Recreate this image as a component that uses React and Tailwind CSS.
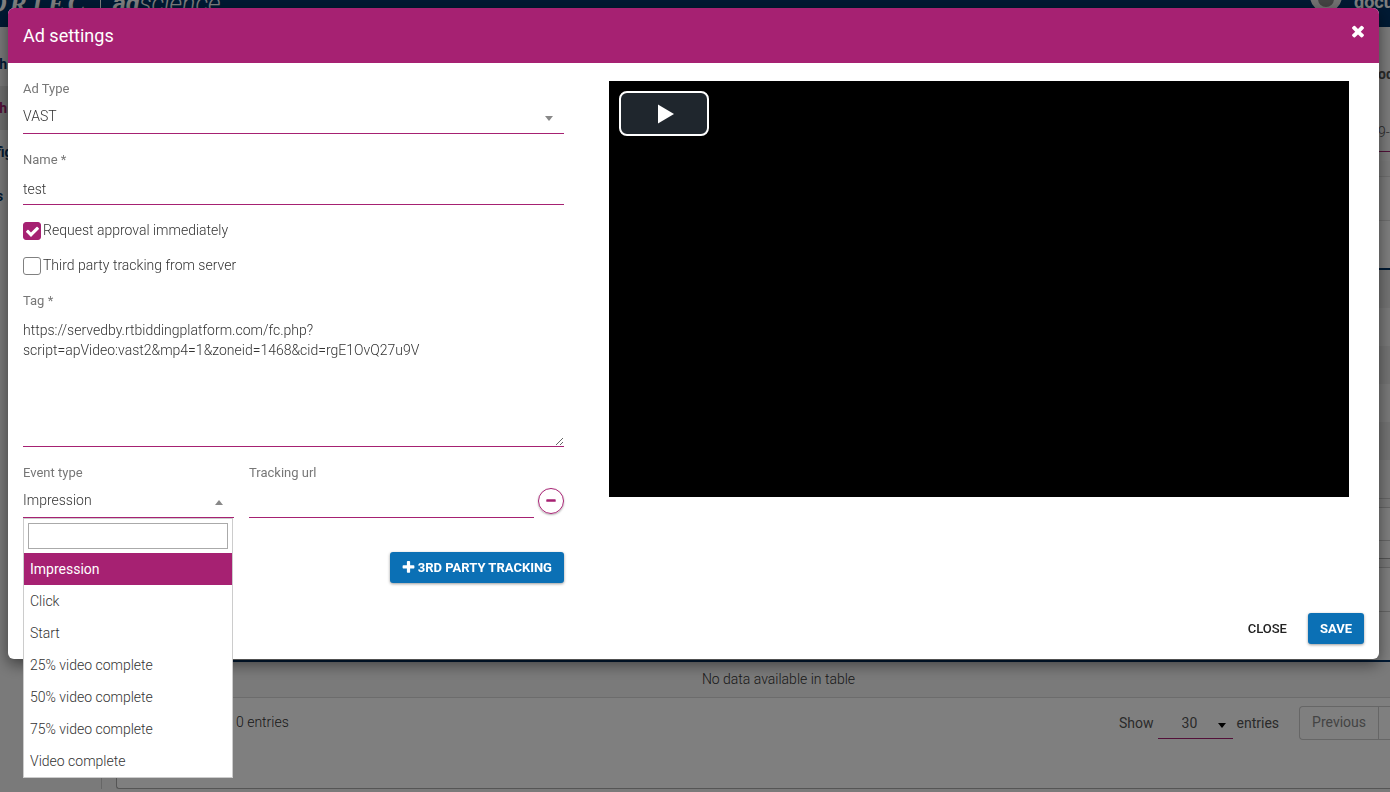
import { useState } from "react";

const events = [
  "Impression",
  "Click",
  "Start",
  "25% video complete",
  "50% video complete",
  "75% video complete",
  "Video complete",
];

const labelClass = "block text-[13px] leading-5 font-normal text-[#777]";
const lineClass = "border-b border-[#a62172] bg-transparent outline-none";

const icons = {
  times:
    "M1490 1322q0 40-28 68l-136 136q-28 28-68 28t-68-28l-294-294-294 294q-28 28-68 28t-68-28l-136-136q-28-28-28-68t28-68l294-294-294-294q-28-28-28-68t28-68l136-136q28-28 68-28t68 28l294 294 294-294q28-28 68-28t68 28l136 136q28 28 28 68t-28 68l-294 294 294 294q28 28 28 68z",
  check:
    "M1671 566q0 40-28 68l-724 724-136 136q-28 28-68 28t-68-28l-136-136-362-362q-28-28-28-68t28-68l136-136q28-28 68-28t68 28l294 295 656-657q28-28 68-28t68 28l136 136q28 28 28 68z",
  plus:
    "M1600 736v192q0 40-28 68t-68 28h-416v416q0 40-28 68t-68 28h-192q-40 0-68-28t-28-68v-416h-416q-40 0-68-28t-28-68v-192q0-40 28-68t68-28h416v-416q0-40 28-68t68-28h192q40 0 68 28t28 68v416h416q40 0 68 28t28 68z",
  minus:
    "M1600 736v192q0 40-28 68t-68 28h-1216q-40 0-68-28t-28-68v-192q0-40 28-68t68-28h1216q40 0 68 28t28 68z",
};

function Icon({ name, className }) {
  return (
    <svg viewBox="0 0 1792 1792" className={"shrink-0 " + className} aria-hidden="true">
      <path d={icons[name]} fill="currentColor" />
    </svg>
  );
}

function Caret({ up = false, className = "text-[#888]" }) {
  return (
    <svg viewBox="0 0 8 5" className={"mt-1 h-[5px] w-2 shrink-0 " + className} aria-hidden="true">
      <path d={up ? "M0 5 4 0 8 5Z" : "M0 0 8 0 4 5Z"} fill="currentColor" />
    </svg>
  );
}

function Header() {
  return (
    <header className="flex h-[27px] items-start justify-between overflow-hidden bg-[#003468] text-white">
      <div className="-mt-3 -ml-3 flex items-center gap-3 whitespace-nowrap">
        <span className="font-['Liberation_Serif',serif] text-[26px] leading-8 font-bold tracking-widest italic">ORTEC</span>
        <span className="h-6 w-px bg-white" />
        <span className="text-[25px] leading-8 italic">
          <b>ad</b>
          <span className="font-light">science</span>
        </span>
      </div>
      <div className="-mt-5 flex gap-3">
        <svg viewBox="0 0 32 32" className="size-8" aria-hidden="true">
          <circle cx="16" cy="16" r="16" fill="#e5e5e5" />
          <circle cx="16" cy="19" r="8" fill="#888" />
        </svg>
        <span className="mt-3 w-9 overflow-hidden text-[18px] leading-5 font-bold whitespace-nowrap">docu</span>
      </div>
    </header>
  );
}

function Sidebar() {
  return (
    <nav className="w-[102px] shrink-0 overflow-hidden border-r border-[#ccc] pt-[15px] text-[14px] font-bold text-[#003468]">
      <a href="#dash" className="-ml-2 flex h-11 items-center">sh</a>
      <a href="#campaigns" className="-ml-2 flex h-11 items-center bg-[#dedede] text-[#a62172]">sh</a>
      <a href="#config" className="-ml-1 flex h-11 items-center">fig</a>
      <a href="#reports" className="-ml-1 flex h-11 items-center">s</a>
    </nav>
  );
}

function Background() {
  return (
    <div className="h-screen overflow-hidden bg-[#f4f4f4]">
      <Header />
      <div className="flex">
        <Sidebar />
        <main className="ml-[14px] min-w-0 flex-1 text-[14px] text-[#555]">
          <div className="h-[134px] bg-[#f8f8f8]">
            <div className="flex h-[94px] items-center justify-end font-bold"><span className="w-3 overflow-hidden whitespace-nowrap">od</span></div>
            <div className="-mt-2 flex h-[39px] items-center justify-end border-b border-[#a62172]"><span className="w-3 overflow-hidden font-light whitespace-nowrap">9-0</span></div>
          </div>
          <div className="mt-[15px] h-[45px] border-y border-[#ddd] bg-[#f8f8f8]" />
          <div className="h-[49px] border-b-2 border-[#003468] bg-white" />
          <div className="h-[38px] bg-[#e8e8e8]" />
          <div className="h-[38px] bg-[#f4f4f4]" />
          <div className="h-[38px] bg-[#e8e8e8]" />
          <div className="h-[38px] bg-[#f4f4f4]" />
          <div className="h-[38px] bg-[#e8e8e8]" />
          <div className="h-[39px] border-b border-[#ccc] bg-[#f4f4f4]" />
          <div className="mt-2 h-[34px] border-y border-[#ccc] bg-white" />
          <div className="h-[18px] border-b border-[#aaa] bg-white" />
          <section className="mt-2 rounded-bl-[3px] border-b border-l border-[#aaa] bg-white">
            <div className="h-[45px] border-y border-[#ccc]" />
            <table className="w-full border-b border-[#d8d8d8]">
              <thead><tr><th className="h-[49px] border-b-2 border-[#003468]" /></tr></thead>
              <tbody>
                <tr>
                  <td className="h-9 bg-[#f4f4f4] pl-[50px] text-center leading-5 font-light text-[#333]">No data available in table</td>
                </tr>
              </tbody>
            </table>
            <div className="flex h-[90px] items-start justify-between pt-2 pl-[119px]">
              <span className="pt-1.5 leading-5 font-light text-[#333]">0 entries</span>
              <div className="flex items-start font-normal">
                <label htmlFor="rows" className="pt-[7px] leading-5">Show</label>
                <div className="mx-1 flex h-[33px] w-[75px] items-center border-b border-[#a62172] pt-1">
                  <select id="rows" defaultValue="30" className="w-[60px] appearance-none bg-transparent pl-6 outline-none">
                    <option>30</option>
                  </select>
                  <Caret className="text-black" />
                </div>
                <span className="pt-[7px] leading-5">entries</span>
                <div className="ml-5 flex h-[34px] items-stretch rounded-l border border-r-0 border-[#ccc] text-[#888]">
                  <button type="button" className="border-r border-[#ccc] px-3">Previous</button>
                  <span className="w-[11px]" />
                </div>
              </div>
            </div>
          </section>
        </main>
      </div>
    </div>
  );
}

function CheckRow({ id, label, checked, onChange }) {
  return (
    <div className="flex items-center gap-[2px]">
      <span className="grid size-[18px] place-items-center">
        <input
          id={id}
          type="checkbox"
          checked={checked}
          onChange={onChange}
          className="col-start-1 row-start-1 size-[18px] appearance-none rounded-[3px] border border-[#808080] bg-white checked:border-[#a62172] checked:bg-[#a62172]"
        />
        {checked && <Icon name="check" className="pointer-events-none col-start-1 row-start-1 size-[15px] text-white" />}
      </span>
      <label htmlFor={id} className="pb-[2px] leading-5">{label}</label>
    </div>
  );
}

function EventSelect() {
  const [value, setValue] = useState("Impression");
  return (
    <div className="relative">
      <span id="event-label" className={labelClass}>Event type</span>
      <button
        type="button"
        aria-labelledby="event-label"
        aria-expanded="true"
        className={lineClass + " flex h-[35px] w-full items-center justify-between pr-[11px] font-light"}
      >
        {value}
        <Caret up />
      </button>
      <div className="absolute top-full left-0 w-[210px] border border-[#ccc] bg-white">
        <div className="p-1">
          <input aria-label="Search event types" className="block h-[26px] w-full border border-[#aaa] px-1 outline-none" />
        </div>
        <ul role="listbox" aria-labelledby="event-label">
          {events.map((e) => (
            <li
              key={e}
              role="option"
              aria-selected={e === value}
              onClick={() => setValue(e)}
              className={e === value ? "bg-[#a62172] p-1.5 leading-5 font-normal text-white" : "p-1.5 leading-5"}
            >
              {e}
            </li>
          ))}
        </ul>
      </div>
    </div>
  );
}

export default function App() {
  const [approve, setApprove] = useState(true);
  const [third, setThird] = useState(false);
  return (
    <div className="font-[Roboto,sans-serif]">
      <Background />
      <div className="fixed inset-0 bg-black/50 px-2 pt-2 pr-[11px]">
        <div role="dialog" aria-label="Ad settings" className="rounded-md bg-white text-[14px] font-light text-[#333] shadow-[0_5px_15px_rgba(0,0,0,0.5)]">
          <div className="flex h-[55px] items-start justify-between rounded-t-md bg-[#a62172] px-[15px] text-white">
            <h1 className="pt-4 text-[18px] leading-6 font-normal">Ad settings</h1>
            <button type="button" aria-label="Dismiss" className="-mr-[3px] pt-[14px]">
              <Icon name="times" className="size-[18px]" />
            </button>
          </div>

          <div className="flex gap-[45px] px-[15px] pt-4 pr-[30px]">
            <form className="min-w-0 basis-[541px]">
              <label htmlFor="adtype" className={labelClass}>Ad Type</label>
              <div className={lineClass + " flex h-[35px] items-center pr-[11px]"}>
                <select id="adtype" defaultValue="VAST" className="flex-1 appearance-none outline-none">
                  <option>VAST</option>
                </select>
                <Caret />
              </div>

              <label htmlFor="name" className={labelClass + " mt-4"}>Name *</label>
              <input id="name" defaultValue="test" className={lineClass + " block h-[35px] w-full pt-1"} />

              <div className="mt-[15px] flex flex-col gap-[13px]">
                <CheckRow id="approve" label="Request approval immediately" checked={approve} onChange={() => setApprove(!approve)} />
                <CheckRow id="third" label="Third party tracking from server" checked={third} onChange={() => setThird(!third)} />
              </div>

              <label htmlFor="tag" className={labelClass + " mt-[14px]"}>Tag *</label>
              <textarea
                id="tag"
                defaultValue="https://servedby.rtbiddingplatform.com/fc.php?script=apVideo:vast2&mp4=1&zoneid=1468&cid=rgE1OvQ27u9V"
                className={lineClass + " block h-[136px] w-full resize-y pt-[9px] leading-5"}
              />

              <div className="mt-4 flex">
                <div className="w-[211px]"><EventSelect /></div>
                <div className="ml-[15px] flex-1">
                  <label htmlFor="url" className={labelClass}>Tracking url</label>
                  <input id="url" className={lineClass + " block h-[35px] w-full"} />
                </div>
                <button type="button" aria-label="Remove tracking" className="mt-[25px] ml-1 grid size-[26px] place-items-center rounded-full border border-[#a62172] text-[#a62172] shadow-[0_1px_2px_rgba(0,0,0,0.3)]">
                  <Icon name="minus" className="size-3" />
                </button>
              </div>

              <div className="mt-[34px] flex justify-end">
                <button type="button" className="flex h-[31px] items-center gap-[2px] rounded-[3px] bg-[#0b70b5] pr-3 pl-[11px] text-[13px] font-bold text-white shadow-[0_1px_3px_rgba(0,0,0,0.4)]">
                  <Icon name="plus" className="size-[15px]" />
                  3RD PARTY TRACKING
                </button>
              </div>
            </form>

            <div className="mt-[2px] h-[416px] flex-1 bg-black p-[10px]">
              <button type="button" aria-label="Play video" className="grid h-[45px] w-[90px] place-items-center rounded-[8px] border-2 border-white bg-[#1f262d]">
                <svg viewBox="0 0 16 20" className="ml-1 h-5 w-4" aria-hidden="true"><path d="M0 0.5 16 10 0 19.5Z" fill="white" /></svg>
              </button>
            </div>
          </div>

          <div className="mt-[30px] flex items-center justify-end gap-[9px] px-[15px] pb-[15px] text-[13px]">
            <button type="button" className="h-[31px] px-3 font-medium text-[#222]">CLOSE</button>
            <button type="button" className="h-[31px] rounded-[3px] bg-[#0b70b5] px-3 font-bold text-white shadow-[0_1px_3px_rgba(0,0,0,0.4)]">SAVE</button>
          </div>
        </div>
      </div>
    </div>
  );
}
